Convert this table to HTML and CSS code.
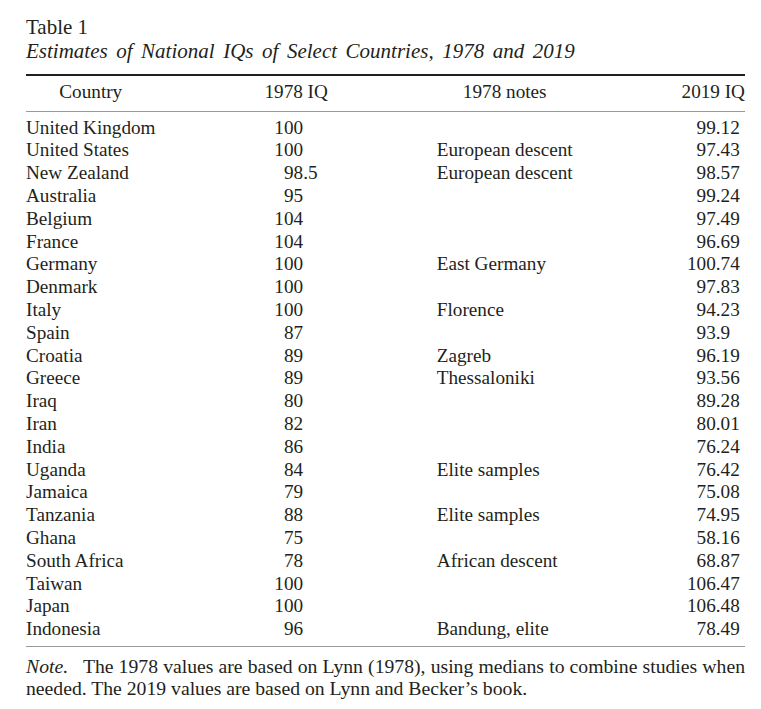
FILE: index.html
```html
<!DOCTYPE html>
<html lang="en">
<head>
<meta charset="utf-8">
<title>Table 1</title>
<link rel="stylesheet" href="styles.css">
</head>
<body>
<div class="page">
  <div class="caption">
    <div class="label">Table 1</div>
    <div class="title">Estimates of National IQs of Select Countries, 1978 and 2019</div>
  </div>
  <div class="grid">
    <div class="rule top"></div>
    <div class="th">Country</div>
    <div class="th">1978 IQ</div>
    <div class="th">1978 notes</div>
    <div class="th">2019 IQ</div>
    <div class="rule mid"></div>

    <div class="td">United Kingdom</div><div class="td dec d78"><span class="i">100</span><span class="f"></span></div><div class="td"></div><div class="td dec d19"><span class="i">99</span><span class="f">.12</span></div>
    <div class="td">United States</div><div class="td dec d78"><span class="i">100</span><span class="f"></span></div><div class="td">European descent</div><div class="td dec d19"><span class="i">97</span><span class="f">.43</span></div>
    <div class="td">New Zealand</div><div class="td dec d78"><span class="i">98</span><span class="f">.5</span></div><div class="td">European descent</div><div class="td dec d19"><span class="i">98</span><span class="f">.57</span></div>
    <div class="td">Australia</div><div class="td dec d78"><span class="i">95</span><span class="f"></span></div><div class="td"></div><div class="td dec d19"><span class="i">99</span><span class="f">.24</span></div>
    <div class="td">Belgium</div><div class="td dec d78"><span class="i">104</span><span class="f"></span></div><div class="td"></div><div class="td dec d19"><span class="i">97</span><span class="f">.49</span></div>
    <div class="td">France</div><div class="td dec d78"><span class="i">104</span><span class="f"></span></div><div class="td"></div><div class="td dec d19"><span class="i">96</span><span class="f">.69</span></div>
    <div class="td">Germany</div><div class="td dec d78"><span class="i">100</span><span class="f"></span></div><div class="td">East Germany</div><div class="td dec d19"><span class="i">100</span><span class="f">.74</span></div>
    <div class="td">Denmark</div><div class="td dec d78"><span class="i">100</span><span class="f"></span></div><div class="td"></div><div class="td dec d19"><span class="i">97</span><span class="f">.83</span></div>
    <div class="td">Italy</div><div class="td dec d78"><span class="i">100</span><span class="f"></span></div><div class="td">Florence</div><div class="td dec d19"><span class="i">94</span><span class="f">.23</span></div>
    <div class="td">Spain</div><div class="td dec d78"><span class="i">87</span><span class="f"></span></div><div class="td"></div><div class="td dec d19"><span class="i">93</span><span class="f">.9</span></div>
    <div class="td">Croatia</div><div class="td dec d78"><span class="i">89</span><span class="f"></span></div><div class="td">Zagreb</div><div class="td dec d19"><span class="i">96</span><span class="f">.19</span></div>
    <div class="td">Greece</div><div class="td dec d78"><span class="i">89</span><span class="f"></span></div><div class="td">Thessaloniki</div><div class="td dec d19"><span class="i">93</span><span class="f">.56</span></div>
    <div class="td">Iraq</div><div class="td dec d78"><span class="i">80</span><span class="f"></span></div><div class="td"></div><div class="td dec d19"><span class="i">89</span><span class="f">.28</span></div>
    <div class="td">Iran</div><div class="td dec d78"><span class="i">82</span><span class="f"></span></div><div class="td"></div><div class="td dec d19"><span class="i">80</span><span class="f">.01</span></div>
    <div class="td">India</div><div class="td dec d78"><span class="i">86</span><span class="f"></span></div><div class="td"></div><div class="td dec d19"><span class="i">76</span><span class="f">.24</span></div>
    <div class="td">Uganda</div><div class="td dec d78"><span class="i">84</span><span class="f"></span></div><div class="td">Elite samples</div><div class="td dec d19"><span class="i">76</span><span class="f">.42</span></div>
    <div class="td">Jamaica</div><div class="td dec d78"><span class="i">79</span><span class="f"></span></div><div class="td"></div><div class="td dec d19"><span class="i">75</span><span class="f">.08</span></div>
    <div class="td">Tanzania</div><div class="td dec d78"><span class="i">88</span><span class="f"></span></div><div class="td">Elite samples</div><div class="td dec d19"><span class="i">74</span><span class="f">.95</span></div>
    <div class="td">Ghana</div><div class="td dec d78"><span class="i">75</span><span class="f"></span></div><div class="td"></div><div class="td dec d19"><span class="i">58</span><span class="f">.16</span></div>
    <div class="td">South Africa</div><div class="td dec d78"><span class="i">78</span><span class="f"></span></div><div class="td">African descent</div><div class="td dec d19"><span class="i">68</span><span class="f">.87</span></div>
    <div class="td">Taiwan</div><div class="td dec d78"><span class="i">100</span><span class="f"></span></div><div class="td"></div><div class="td dec d19"><span class="i">106</span><span class="f">.47</span></div>
    <div class="td">Japan</div><div class="td dec d78"><span class="i">100</span><span class="f"></span></div><div class="td"></div><div class="td dec d19"><span class="i">106</span><span class="f">.48</span></div>
    <div class="td">Indonesia</div><div class="td dec d78"><span class="i">96</span><span class="f"></span></div><div class="td">Bandung, elite</div><div class="td dec d19"><span class="i">78</span><span class="f">.49</span></div>

    <div class="rule bottom"></div>
  </div>
  <p class="note"><em class="note-label">Note.</em> The 1978 values are based on Lynn (1978), using medians to combine studies when needed. The 2019 values are based on Lynn and Becker’s book.</p>
</div>
</body>
</html>
```

FILE: styles.css
```css
html, body {
  margin: 0;
  padding: 0;
  background: #ffffff;
}

body {
  font-family: "Liberation Serif", "Times New Roman", serif;
  color: #231f20;
}

.page {
  padding: 16.3px 16px 0 26px;
}

.caption {
  font-size: 21px;
  line-height: 23.3px;
  margin-bottom: 11px;
}

.title {
  font-style: italic;
  word-spacing: 3.3px;
}

.grid {
  display: grid;
  grid-template-columns: repeat(4, auto);
  justify-content: space-between;
  font-size: 19.2px;
  line-height: 22.8px;
}

.rule {
  grid-column: 1 / -1;
}

.rule.top {
  height: 2px;
  background: #231f20;
}

.rule.mid {
  height: 1px;
  background: #9a9a9a;
  margin-bottom: 4.4px;
}

.rule.bottom {
  height: 1px;
  background: #9a9a9a;
  margin-top: 5.5px;
}

.th {
  justify-self: center;
  padding: 5.5px 0 7px;
  white-space: nowrap;
}

.td {
  white-space: nowrap;
  min-height: 22.8px;
}

.dec {
  display: flex;
  justify-self: center;
}

.dec .i {
  width: 29px;
  text-align: right;
}

.d78 .f {
  width: 15px;
}

.d19 .f {
  width: 24px;
}

.note {
  margin: 7.5px 0 0;
  font-size: 19.7px;
  line-height: 22.5px;
  text-align: justify;
}

.note-label {
  margin-right: 10px;
}
```
